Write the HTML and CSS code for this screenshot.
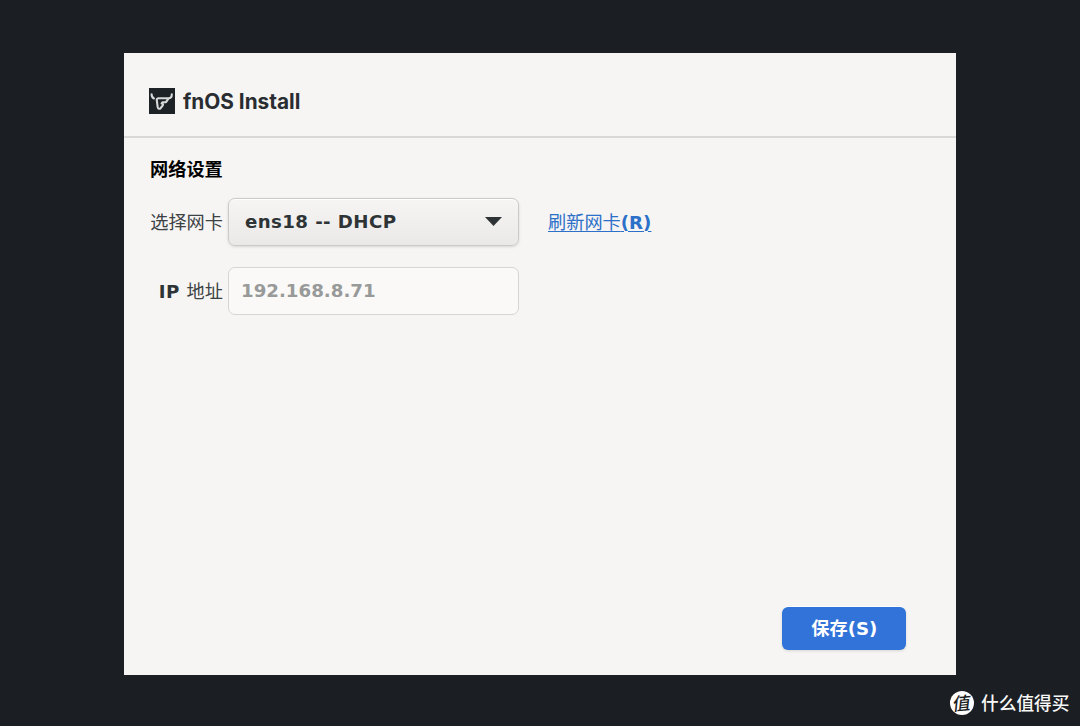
FILE: index.html
```html
<!DOCTYPE html>
<html lang="zh-CN">
<head>
<meta charset="utf-8">
<title>fnOS Install</title>
<link rel="stylesheet" href="styles.css">
</head>
<body>
<main class="window">
  <header class="header">
    <svg class="logo" viewBox="0 0 26 26">
      <rect width="26" height="26" fill="#1d2226"/>
      <path d="M2.6 6.2C2.6 8.4 3.2 9.7 5 10.4M22.8 6.2c0 2.7-.9 4.1-3.1 4.1H9.6c-1.5 0-2 .8-1.8 2.1l.9 6.8c.3 1.9 2 2 3 .8l2.1-2.7c.5-.7.1-1.5-.7-1.5M12.6 15.4l1-1.2h3.4l2.4-3.6" fill="none" stroke="#d8d9d9" stroke-width="2.1" stroke-linecap="round" stroke-linejoin="round"/>
    </svg>
    <h1 class="title">fnOS Install</h1>
  </header>
  <section class="content">
    <h2 class="section-title">网络设置</h2>
    <div class="row">
      <span class="label">选择网卡</span>
      <div class="select"><span>ens18 -- DHCP</span>
        <svg class="arrow" viewBox="0 0 17 9"><path d="M0 0h17L8.5 9z" fill="#2e3436"/></svg>
      </div>
      <a class="refresh" href="#">刷新网卡<b>(R)</b></a>
    </div>
    <div class="row">
      <span class="label"><b class="latin">IP</b> 地址</span>
      <div class="entry">192.168.8.71</div>
    </div>
  </section>
  <footer class="footer"><button class="save">保存(S)</button></footer>
</main>
<div class="watermark"><span class="badge"><span class="badge-glyph">值</span></span><span class="watermark-text">什么值得买</span></div>
</body>
</html>
```
FILE: styles.css
```css
* { box-sizing: border-box; }
body {
  margin: 0;
  width: 1080px;
  height: 726px;
  padding: 53px 0 0 124px;
  overflow: hidden;
  background: #1b1e22;
  color: #2e3436;
  font: 18.2px/24px "DejaVu Sans", "Noto Sans CJK SC", sans-serif;
}
.window {
  display: flex;
  flex-direction: column;
  width: 832.4px;
  height: 622px;
  background: #f6f5f3;
}
.header {
  display: flex;
  align-items: center;
  gap: 8px;
  height: 85px;
  padding: 12px 0 0 25px;
  border-bottom: 2px solid #d9d8d6;
}
.logo { width: 26px; height: 26px; }
.title {
  margin: 0;
  padding-top: 2px;
  color: #292c30;
  font: 650 20.8px/24px Inter, sans-serif;
}
.content { padding: 20px 26px 0; }
.section-title {
  margin: 0 0 15px;
  color: #000;
  font-size: 18.2px;
  font-weight: 700;
  line-height: 24px;
}
.row {
  display: flex;
  align-items: center;
  height: 49px;
  margin-bottom: 20px;
}
.label {
  width: 73px;
  margin-right: 5px;
  padding-top: 3px;
  color: #3c4143;
  text-align: right;
  white-space: nowrap;
}
.latin {
  margin-right: 1px;
  color: #2e3436;
  letter-spacing: .5px;
}
.select, .entry {
  display: flex;
  align-items: center;
  width: 291px;
  height: 48px;
  border: 1.5px solid #cdcac5;
  border-radius: 7px;
  font-weight: 700;
}
.select {
  justify-content: space-between;
  padding: 0 16px;
  background: linear-gradient(#f6f5f4, #eae9e7);
  box-shadow: 0 1px 3px rgba(0, 0, 0, .12), inset 0 1px #fff;
  letter-spacing: .4px;
}
.arrow { width: 17px; height: 9px; }
.entry {
  padding: 0 12px;
  border-color: #d6d5d2;
  background: #faf9f7;
  color: #989a9a;
}
.refresh {
  margin-left: 29px;
  padding-top: 2px;
  color: #2d70c9;
  text-decoration-thickness: 1px;
  text-underline-offset: 2px;
}
.footer {
  display: flex;
  justify-content: flex-end;
  margin-top: auto;
  padding: 0 50px 25px 0;
}
.save {
  width: 124px;
  height: 43px;
  padding: 0;
  border: 0;
  border-radius: 6px;
  background: #3273d9;
  box-shadow: 0 -1px #fff, 0 1px 3px rgba(0, 0, 0, .12);
  color: #fff;
  font: 700 18.2px/24px "DejaVu Sans", "Noto Sans CJK SC", sans-serif;
}
.watermark {
  position: absolute;
  left: 950px;
  top: 691px;
  display: flex;
  align-items: center;
  gap: 7px;
  color: #f7f7f7;
  font: 500 17.7px/22px "Noto Sans CJK SC", sans-serif;
}
.watermark-text { padding-bottom: 2px; }
.badge {
  width: 24px;
  height: 24px;
  border-radius: 50%;
  background: #fff;
  color: #1b1e22;
  font-size: 18px;
  line-height: 22px;
  text-align: center;
}
.badge-glyph {
  display: inline-block;
  transform: skew(-6deg, -5deg);
}
```
